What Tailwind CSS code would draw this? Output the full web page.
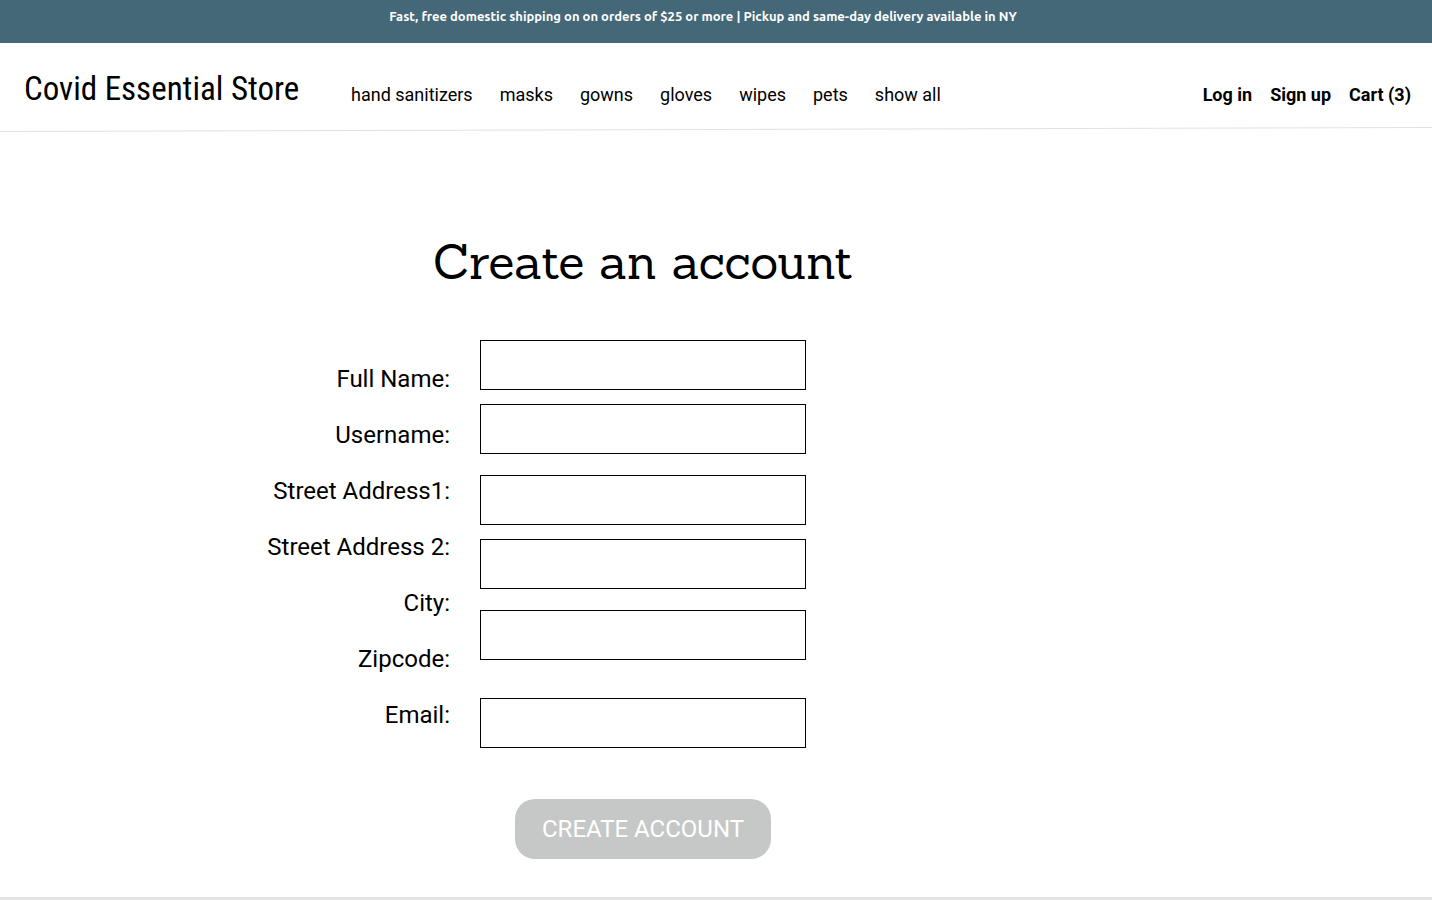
<!DOCTYPE html>
<html lang="en">
<head>
<meta charset="utf-8">
<meta name="viewport" content="width=device-width, initial-scale=1">
<title>Covid Essential Store</title>
<script src="https://cdn.jsdelivr.net/npm/@tailwindcss/browser@4"></script>
</head>
<body class="flex min-h-screen flex-col bg-white font-['Roboto','Liberation_Sans',sans-serif] text-black">
  <div class="h-[43px] bg-[#446877] pr-[26px] pt-[6px] text-center font-['Ubuntu','Noto_Sans',sans-serif] text-[13px] leading-5 font-bold text-white">Fast, free domestic shipping on on orders of $25 or more | Pickup and same-day delivery available in NY</div>
  <header>
    <div class="flex h-[84px] items-center pr-[21px] pl-6">
      <a href="#" class="mt-2 w-[327px] shrink-0 font-['Ubuntu_Condensed','Roboto_Condensed',sans-serif] text-[33px] leading-10 whitespace-nowrap">Covid Essential Store</a>
      <nav class="mt-5 flex gap-[27px] text-[18px] leading-6 whitespace-nowrap">
        <a href="#">hand sanitizers</a>
        <a href="#">masks</a>
        <a href="#">gowns</a>
        <a href="#">gloves</a>
        <a href="#">wipes</a>
        <a href="#">pets</a>
        <a href="#">show all</a>
      </nav>
      <div class="mt-5 ml-auto flex gap-[18px] text-[18px] leading-6 font-bold whitespace-nowrap">
        <a href="#">Log in</a>
        <a href="#">Sign up</a>
        <a href="#">Cart (3)</a>
      </div>
    </div>
    <svg class="block h-[5px] w-full" viewBox="0 0 1432 5" preserveAspectRatio="none" aria-hidden="true"><path d="M0 4.5L1432 .5" stroke="#dfe3e3" stroke-width="1"/></svg>
  </header>
  <main class="flex-1 pt-[100px] pr-[146px] pb-[38px]">
    <h1 class="text-center font-['Sanchez','DejaVu_Serif',serif] text-[48px] leading-[60px]">Create an account</h1>
    <form class="mt-12">
      <div class="grid grid-cols-[1fr_326px_1fr] gap-x-[30px]">
        <div class="flex flex-col items-end gap-6 pt-[23px] text-[24px] leading-8">
          <label for="name">Full Name:</label>
          <label for="username">Username:</label>
          <label for="street1">Street Address1:</label>
          <label for="street2">Street Address 2:</label>
          <label for="city">City:</label>
          <label for="city">Zipcode:</label>
          <label for="email">Email:</label>
        </div>
        <div class="flex flex-col">
          <input id="name" type="text" class="h-[50px] border border-black px-3 text-[24px]">
          <input id="username" type="text" class="mt-[14px] h-[50px] border border-black px-3 text-[24px]">
          <input id="street1" type="text" class="mt-[21px] h-[50px] border border-black px-3 text-[24px]">
          <input id="street2" type="text" class="mt-[14px] h-[50px] border border-black px-3 text-[24px]">
          <input id="city" type="text" class="mt-[21px] h-[50px] border border-black px-3 text-[24px]">
          <input id="email" type="email" class="mt-[38px] h-[50px] border border-black px-3 text-[24px]">
        </div>
      </div>
      <button type="submit" class="mx-auto mt-[51px] block h-[60px] w-64 rounded-[20px] bg-[#c6c8c7] text-[24px] leading-8 text-white">CREATE ACCOUNT</button>
    </form>
  </main>
  <footer class="h-[3px] bg-[#e4e4e4]"></footer>
</body>
</html>
